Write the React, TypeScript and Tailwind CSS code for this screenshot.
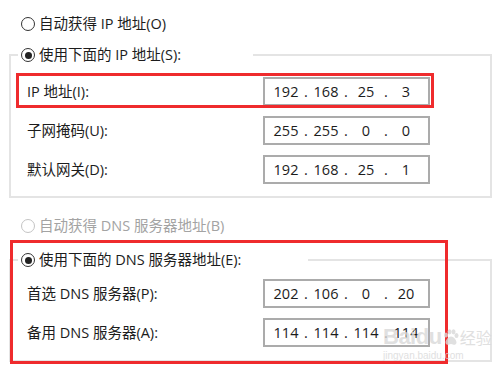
import React from "react";

const FONT = '"Open Sans", "Noto Sans CJK SC", sans-serif';

function Radio({ checked, disabled }: { checked?: boolean; disabled?: boolean }) {
  return (
    <span
      className={
        "flex items-center justify-center w-[14px] h-[14px] rounded-full border shrink-0 bg-white " +
        (disabled ? "border-[#c4c4c4]" : "border-[#333333]")
      }
    >
      {checked && <span className="block w-[7px] h-[7px] rounded-full bg-[#222222]" />}
    </span>
  );
}

function IpBox({ parts }: { parts: string[] }) {
  return (
    <div className="h-[29px] w-[167px] border-2 border-[#ababab] bg-white flex items-center pl-[5px] text-[14.5px] text-[#1c1c1c]">
      {parts.map((p, i) => (
        <React.Fragment key={i}>
          <span className="w-[32px] text-center">{p}</span>
          {i < 3 && <span className="w-[8px] text-center">.</span>}
        </React.Fragment>
      ))}
    </div>
  );
}

function Row({ label, parts }: { label: string; parts: string[] }) {
  return (
    <div className="flex items-center">
      <span className="w-[236px] text-[14.5px] text-[#1c1c1c]">{label}</span>
      <IpBox parts={parts} />
    </div>
  );
}

export default function App() {
  return (
    <div
      className="relative w-[500px] h-[375px] bg-white overflow-hidden"
      style={{ fontFamily: FONT }}
    >
      <div className="flex items-center gap-[4px] h-[20px] mt-[14px] pl-[21px] text-[14.5px] text-[#1c1c1c]">
        <Radio />
        <span>自动获得 IP 地址(O)</span>
      </div>

      <fieldset className="ml-[9px] w-[483px] mt-[11px] border-2 border-[#e4e4e4] pl-[16px] pt-[12px] pb-[12px]">
        <legend className="-ml-[9px] w-[235px] h-[20px] px-[3px] flex items-center gap-[4px] text-[14.5px] text-[#1c1c1c] bg-white">
          <Radio checked />
          <span>使用下面的 IP 地址(S):</span>
        </legend>
        <div className="flex flex-col gap-[10px]">
          <Row label="IP 地址(I):" parts={["192", "168", "25", "3"]} />
          <Row label="子网掩码(U):" parts={["255", "255", "0", "0"]} />
          <Row label="默认网关(D):" parts={["192", "168", "25", "1"]} />
        </div>
      </fieldset>

      <div className="flex items-center gap-[4px] h-[20px] mt-[18px] pl-[21px] text-[14.5px] text-[#a3a3a3]">
        <Radio disabled />
        <span>自动获得 DNS 服务器地址(B)</span>
      </div>

      <fieldset className="ml-[9px] w-[483px] mt-[14px] border-2 border-[#e4e4e4] pl-[16px] pt-[9px] pb-[13px]">
        <legend className="-ml-[9px] w-[290px] h-[20px] px-[3px] flex items-center gap-[4px] text-[14.5px] text-[#1c1c1c] bg-white">
          <Radio checked />
          <span>使用下面的 DNS 服务器地址(E):</span>
        </legend>
        <div className="flex flex-col gap-[10px]">
          <Row label="首选 DNS 服务器(P):" parts={["202", "106", "0", "20"]} />
          <Row label="备用 DNS 服务器(A):" parts={["114", "114", "114", "114"]} />
        </div>
      </fieldset>

      {/* red annotation boxes */}
      <div className="absolute left-[16px] top-[73px] w-[418px] h-[35px] border-[3px] border-[#ef2b2d]" />
      <div className="absolute left-[10px] top-[240px] w-[438px] h-[124px] border-[3px] border-[#ef2b2d]" />

      {/* watermark */}
      <div className="absolute left-[383px] top-[326px] flex flex-col items-start text-[#d9d9d9] opacity-80 pointer-events-none">
        <div className="flex items-center leading-none">
          <span className="text-[22px] font-bold tracking-[-0.5px]" style={{ fontFamily: '"Liberation Sans", sans-serif' }}>
            Baidu
          </span>
          <svg width="16" height="17" viewBox="0 0 16 17" className="mx-[1px]">
            <g fill="#d9d9d9">
              <ellipse cx="3" cy="6" rx="2" ry="2.6" />
              <ellipse cx="6.5" cy="2.8" rx="2" ry="2.6" />
              <ellipse cx="10.5" cy="2.8" rx="2" ry="2.6" />
              <ellipse cx="13.5" cy="6.5" rx="2" ry="2.6" />
              <path d="M8 7.5c-2.5 0-5.5 3.5-5.5 6 0 2 2 2.5 3 2.2 1-.3 1.6-.6 2.5-.6s1.5.3 2.5.6c1 .3 3-.2 3-2.2 0-2.5-3-6-5.5-6z" />
            </g>
          </svg>
          <span className="text-[16px]" style={{ fontFamily: '"Noto Sans CJK SC", sans-serif' }}>经验</span>
        </div>
        <span className="text-[10px] leading-none mt-[3px]" style={{ fontFamily: '"Liberation Sans", sans-serif' }}>
          jingyan.baidu.com
        </span>
      </div>
    </div>
  );
}
